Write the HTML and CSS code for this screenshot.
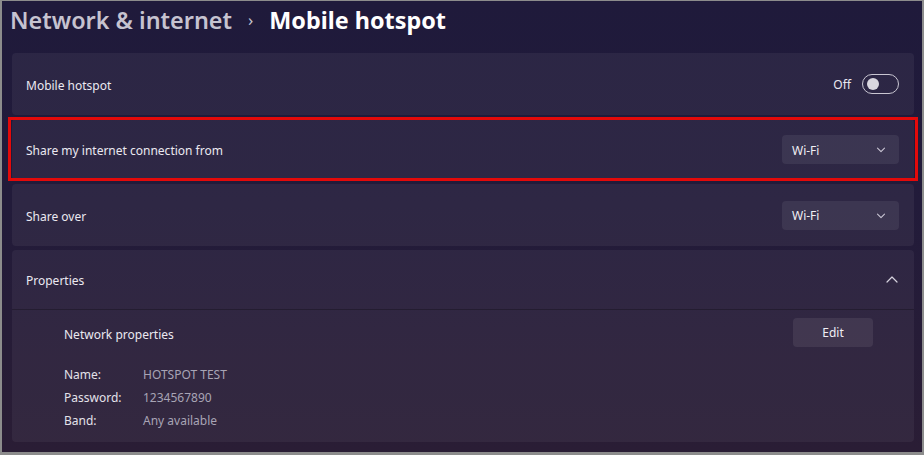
FILE: index.html
```html
<!DOCTYPE html>
<html>
<head>
<meta charset="utf-8">
<link rel="stylesheet" href="styles.css">
</head>
<body>
<div class="frame">
  <div class="window">
    <h1 class="title"><span class="crumb">Network &amp; internet</span><span class="sep">›</span><span class="current">Mobile hotspot</span></h1>
    <div class="list">
      <div class="card row">
        <span class="label">Mobile hotspot</span>
        <div class="toggle-wrap"><span class="state">Off</span><span class="toggle"><span class="knob"></span></span></div>
      </div>
      <div class="card row highlighted">
        <span class="label">Share my internet connection from</span>
        <div class="select"><span>Wi-Fi</span>
          <svg class="chev" width="10" height="6" viewBox="0 0 10 6"><path d="M1.5 1.2 L5 4.6 L8.5 1.2" fill="none" stroke="#c9c5d4" stroke-width="1.1" stroke-linecap="round" stroke-linejoin="round"/></svg>
        </div>
        <div class="highlight-box"></div>
      </div>
      <div class="card row">
        <span class="label">Share over</span>
        <div class="select"><span>Wi-Fi</span>
          <svg class="chev" width="10" height="6" viewBox="0 0 10 6"><path d="M1.5 1.2 L5 4.6 L8.5 1.2" fill="none" stroke="#c9c5d4" stroke-width="1.1" stroke-linecap="round" stroke-linejoin="round"/></svg>
        </div>
      </div>
      <div class="card props">
        <div class="row props-head">
          <span class="label">Properties</span>
          <svg class="up" width="12" height="7" viewBox="0 0 12 7"><path d="M1 6 L6 1 L11 6" fill="none" stroke="#d6d3de" stroke-width="1.2" stroke-linecap="round" stroke-linejoin="round"/></svg>
        </div>
        <div class="props-body">
          <div class="np-row">
            <span class="label">Network properties</span>
            <button class="edit">Edit</button>
          </div>
          <div class="kv">
            <span class="k">Name:</span><span class="v">HOTSPOT TEST</span>
            <span class="k">Password:</span><span class="v">1234567890</span>
            <span class="k">Band:</span><span class="v">Any available</span>
          </div>
        </div>
      </div>
    </div>
  </div>
</div>
</body>
</html>
```

FILE: styles.css
```css
* { box-sizing: border-box; }
html, body { margin: 0; padding: 0; }
body {
  width: 924px;
  height: 455px;
  background: #8c8c8c;
  font-family: "Noto Sans", "Open Sans", sans-serif;
  overflow: hidden;
}
.frame {
  padding: 1px 2px 3px 2px;
  height: 455px;
}
.window {
  height: 451px;
  background: linear-gradient(180deg, #1f1a3b 0%, #221b3a 45%, #2a1d35 100%);
  padding: 0 8px 0 10px;
  color: #e9e7ef;
}
.title {
  margin: 0 0 0 -2px;
  height: 52px;
  padding-top: 3px;
  font-size: 23.4px;
  font-weight: 400;
  line-height: 32px;
  display: flex;
  align-items: baseline;
}
.crumb { color: #c6c3d0; font-weight: 600; }
.sep { color: #c6c3d0; font-size: 17px; margin: 0 16px 0 16px; position: relative; top: -3px; }
.current { color: #ffffff; font-weight: 700; }
.list {
  display: flex;
  flex-direction: column;
  gap: 4px;
}
.card {
  background: rgba(255,255,255,0.055);
  border-radius: 4px;
  position: relative;
}
.row {
  height: 62px;
  display: flex;
  align-items: center;
  justify-content: space-between;
  padding: 2px 15px 0 14px;
}
.highlighted { height: 61px; }
.label {
  font-size: 12px;
  color: #ebe9f1;
}
.toggle-wrap { display: flex; align-items: center; gap: 11px; margin-top: -2px; }
.state { font-size: 12px; color: #ebe9f1; }
.toggle {
  width: 37px; height: 20px;
  border: 1px solid #c9c6d2;
  border-radius: 10px;
  display: flex; align-items: center;
  padding-left: 4px;
}
.knob { width: 12px; height: 12px; border-radius: 50%; background: #d9d7df; }
.select {
  width: 117px; height: 29px;
  margin-top: -2px;
  background: rgba(255,255,255,0.07);
  border-radius: 4px;
  display: flex; align-items: center; justify-content: space-between;
  padding: 1px 13px 0 10px;
  font-size: 12px;
  color: #f0eef4;
}
.highlight-box {
  position: absolute;
  left: -4px; right: -4px;
  top: -2px; bottom: -1px;
  border: 3px solid #e30a0a;
  pointer-events: none;
}
.props { height: 192px; background: rgba(255,255,255,0.05); }
.props-head {
  height: 60px;
  border-bottom: 1px solid rgba(0,0,0,0.25);
  padding-right: 16px;
}
.up { margin-top: -3px; }
.props-body {
  padding: 8px 41px 0 52px;
}
.np-row {
  height: 29px;
  display: flex; align-items: center; justify-content: space-between;
}
.np-row .label { padding-top: 3px; }
.edit {
  width: 80px; height: 29px;
  border: none;
  border-radius: 4px;
  background: rgba(255,255,255,0.08);
  color: #f0eef4;
  font-family: inherit;
  font-size: 12px;
  padding-top: 1px;
}
.kv {
  margin-top: 16px;
  display: grid;
  grid-template-columns: 79px auto;
  grid-auto-rows: 23px;
  align-items: center;
  font-size: 12px;
}
.k { color: #e4e2ea; }
.v { color: #a8a4b5; }
```
